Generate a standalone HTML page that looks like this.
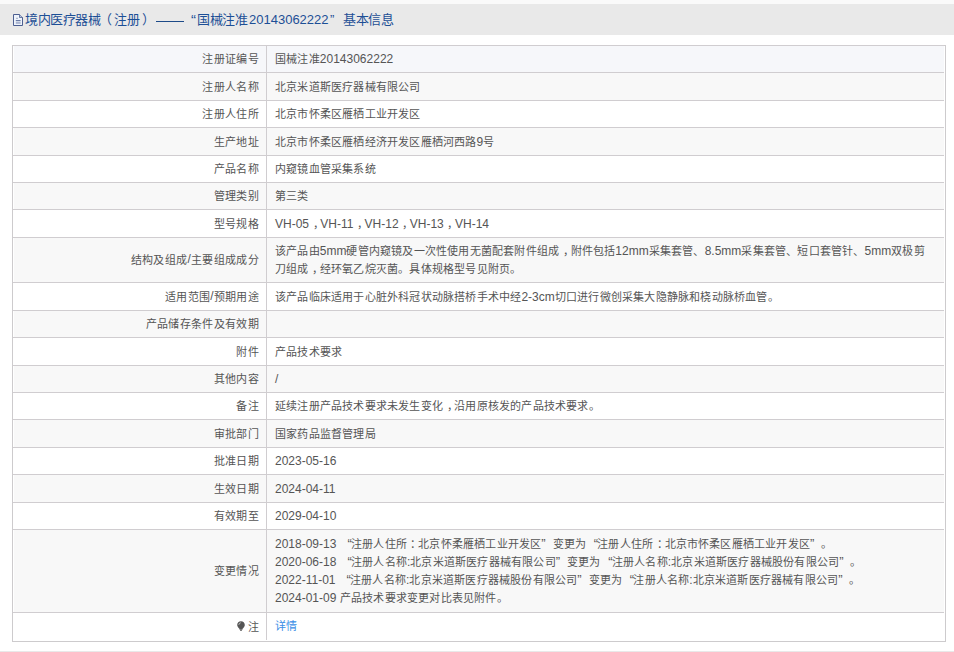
<!DOCTYPE html><html lang="zh-CN"><head><meta charset="utf-8"><style>
*{margin:0;padding:0;box-sizing:border-box}
html,body{width:954px;height:652px;overflow:hidden;background:#fff}
.top{position:absolute;left:0;top:0;width:954px;height:4px;background:#fafafa}
.bot{position:absolute;left:0;top:651px;width:954px;height:1px;background:#e9e9e9}
body{position:relative;font-family:"Liberation Sans",sans-serif;font-size:11px;letter-spacing:0.2px;color:#555}
.a{font-size:12px;letter-spacing:0}
.fc{position:relative;left:3.5px}
.lq{display:inline-block;width:11.2px;text-align:right;font-size:13px;position:relative;left:1px}
.rq{display:inline-block;width:11.2px;text-align:left;font-size:13px}
.hdr{position:absolute;left:0;top:4px;width:954px;height:31px;background:#e9e9e9}
.t{position:absolute;top:11px;font-size:13px;letter-spacing:-0.4px;line-height:18px;color:#1d4f96;white-space:nowrap}
.t.d{font-size:13px;letter-spacing:0}
.t.dash{letter-spacing:0.8px}
.t.q{font-size:15px;top:11px}
.dashl{position:absolute;left:156px;top:21px;width:28px;height:1px;background:#1d4a88}
.ico{position:absolute;left:13px;top:14px;width:10px;height:12px}
.frame{position:absolute;left:12px;top:45px;width:934px;height:597px;border:1px solid #cdcbcd}
.row{position:absolute;left:13px;width:931px;border-top:1px solid #d0cdd0;box-shadow:inset 1px 0 #fff}
.g{background:#f8f8f8}
.b{background:#f6f7fa}
.w{background:#fff}
.lab{position:absolute;left:0;top:-1px;bottom:1px;width:253px;display:flex;align-items:center;justify-content:flex-end;padding-right:7px;white-space:nowrap;letter-spacing:0.35px}
.sep{position:absolute;left:253px;top:0;bottom:0;width:1px;background:#d0cdd0}
.val{position:absolute;left:262px;top:0;bottom:0;right:0;display:flex;align-items:center;line-height:18px;white-space:nowrap}
.val>div{}
.lnk{color:#3a8ee6}
.last .val{bottom:1px}
.bulb{display:inline-block;width:8px;height:10px;margin-right:2.5px;vertical-align:0px}
</style></head><body>
<div class="top"></div><div class="hdr"></div><div class="bot"></div>
<svg class="ico" viewBox="0 0 10 12"><path d="M0.5 0.5H6.5L9.5 3.5V11.5H0.5Z" fill="#eef3fb" stroke="#4d5f91" stroke-width="1"/><path d="M6.5 0.5V3.5H9.5" fill="#b8c3dd" stroke="#4d5f91" stroke-width="0.8"/><path d="M3 4.3H5" stroke="#98a2bd" stroke-width="0.9"/><path d="M2.8 6.7H7.6" stroke="#4d5f91" stroke-width="1"/><rect x="2.8" y="8.1" width="4.8" height="1.7" fill="#a3afcc"/></svg>
<div class="t " style="left:25px">境内医疗器械</div>
<div class="t " style="left:99px">（</div>
<div class="t " style="left:114px">注册</div>
<div class="t " style="left:142px">）</div>
<div class="t q" style="left:191px">“</div>
<div class="t " style="left:197px">国械注准</div>
<div class="t d" style="left:249px">20143062222</div>
<div class="t " style="left:330px">”</div>
<div class="t " style="left:343px">基本信息</div>
<div class="dashl"></div>
<div class="frame"></div>
<div class="row b" style="top:45px;height:27px"><div class="lab">注册证编号</div><div class="sep"></div><div class="val"><div>国械注准<span class="a">20143062222</span></div></div></div>
<div class="row g" style="top:72px;height:28px"><div class="lab">注册人名称</div><div class="sep"></div><div class="val"><div>北京米道斯医疗器械有限公司</div></div></div>
<div class="row w" style="top:100px;height:27px"><div class="lab">注册人住所</div><div class="sep"></div><div class="val"><div>北京市怀柔区雁栖工业开发区</div></div></div>
<div class="row g" style="top:127px;height:28px"><div class="lab">生产地址</div><div class="sep"></div><div class="val"><div>北京市怀柔区雁栖经济开发区雁栖河西路<span class="a">9</span>号</div></div></div>
<div class="row w" style="top:155px;height:27px"><div class="lab">产品名称</div><div class="sep"></div><div class="val"><div>内窥镜血管采集系统</div></div></div>
<div class="row g" style="top:182px;height:27px"><div class="lab">管理类别</div><div class="sep"></div><div class="val"><div>第三类</div></div></div>
<div class="row w" style="top:209px;height:28px"><div class="lab">型号规格</div><div class="sep"></div><div class="val"><div><span class="a">VH-05</span><span class="fc">，</span><span class="a">VH-11</span><span class="fc">，</span><span class="a">VH-12</span><span class="fc">，</span><span class="a">VH-13</span><span class="fc">，</span><span class="a">VH-14</span></div></div></div>
<div class="row g" style="top:237px;height:45px"><div class="lab">结构及组成<span class="a">/</span>主要组成成分</div><div class="sep"></div><div class="val"><div>该产品由<span class="a">5mm</span>硬管内窥镜及一次性使用无菌配套附件组成<span class="fc">，</span>附件包括<span class="a">12mm</span>采集套管、<span class="a">8.5mm</span>采集套管、短口套管针、<span class="a">5mm</span>双极剪<br>刀组成<span class="fc">，</span>经环氧乙烷灭菌。具体规格型号见附页。</div></div></div>
<div class="row w" style="top:282px;height:28px"><div class="lab">适用范围<span class="a">/</span>预期用途</div><div class="sep"></div><div class="val"><div>该产品临床适用于心脏外科冠状动脉搭桥手术中经<span class="a">2-3cm</span>切口进行微创采集大隐静脉和桡动脉桥血管。</div></div></div>
<div class="row g" style="top:310px;height:27px"><div class="lab">产品储存条件及有效期</div><div class="sep"></div><div class="val"><div></div></div></div>
<div class="row w" style="top:337px;height:28px"><div class="lab">附件</div><div class="sep"></div><div class="val"><div>产品技术要求</div></div></div>
<div class="row g" style="top:365px;height:27px"><div class="lab">其他内容</div><div class="sep"></div><div class="val"><div><span class="a">/</span></div></div></div>
<div class="row w" style="top:392px;height:27px"><div class="lab">备注</div><div class="sep"></div><div class="val"><div>延续注册产品技术要求未发生变化<span class="fc">，</span>沿用原核发的产品技术要求。</div></div></div>
<div class="row g" style="top:419px;height:28px"><div class="lab">审批部门</div><div class="sep"></div><div class="val"><div>国家药品监督管理局</div></div></div>
<div class="row w" style="top:447px;height:27px"><div class="lab">批准日期</div><div class="sep"></div><div class="val"><div><span class="a">2023-05-16</span></div></div></div>
<div class="row g" style="top:474px;height:28px"><div class="lab">生效日期</div><div class="sep"></div><div class="val"><div><span class="a">2024-04-11</span></div></div></div>
<div class="row w" style="top:502px;height:27px"><div class="lab">有效期至</div><div class="sep"></div><div class="val"><div><span class="a">2029-04-10</span></div></div></div>
<div class="row g" style="top:529px;height:83px"><div class="lab">变更情况</div><div class="sep"></div><div class="val"><div><span class="a">2018-09-13 </span><span class="lq">“</span>注册人住所<span class="fc">：</span>北京怀柔雁栖工业开发区<span class="rq">”</span>变更为<span class="lq">“</span>注册人住所<span class="fc">：</span>北京市怀柔区雁栖工业开发区<span class="rq">”</span>。<br><span class="a">2020-06-18 </span><span class="lq">“</span>注册人名称<span class="a">:</span>北京米道斯医疗器械有限公司<span class="rq">”</span>变更为<span class="lq">“</span>注册人名称<span class="a">:</span>北京米道斯医疗器械股份有限公司<span class="rq">”</span>。<br><span class="a">2022-11-01 </span><span class="lq">“</span>注册人名称<span class="a">:</span>北京米道斯医疗器械股份有限公司<span class="rq">”</span>变更为<span class="lq">“</span>注册人名称<span class="a">:</span>北京米道斯医疗器械有限公司<span class="rq">”</span>。<br><span class="a">2024-01-09 </span>产品技术要求变更对比表见附件。</div></div></div>
<div class="row w last" style="top:612px;height:28px"><div class="lab"><svg class="bulb" viewBox="0 0 8 10"><path d="M4 0.3C6.2 0.3 7.8 1.9 7.8 4C7.8 5.6 6.6 6.5 5.6 7.8L5.4 8.8H2.6L2.4 7.8C1.4 6.5 0.2 5.6 0.2 4C0.2 1.9 1.8 0.3 4 0.3Z" fill="#555"/><rect x="3" y="9.1" width="2" height="0.9" fill="#777"/><path d="M1.9 3.8C1.9 2.7 2.7 1.9 3.7 1.8" stroke="#ddd" stroke-width="0.8" fill="none"/></svg>注</div><div class="sep"></div><div class="val"><div><span class="lnk">详情</span></div></div></div>
</body></html>
